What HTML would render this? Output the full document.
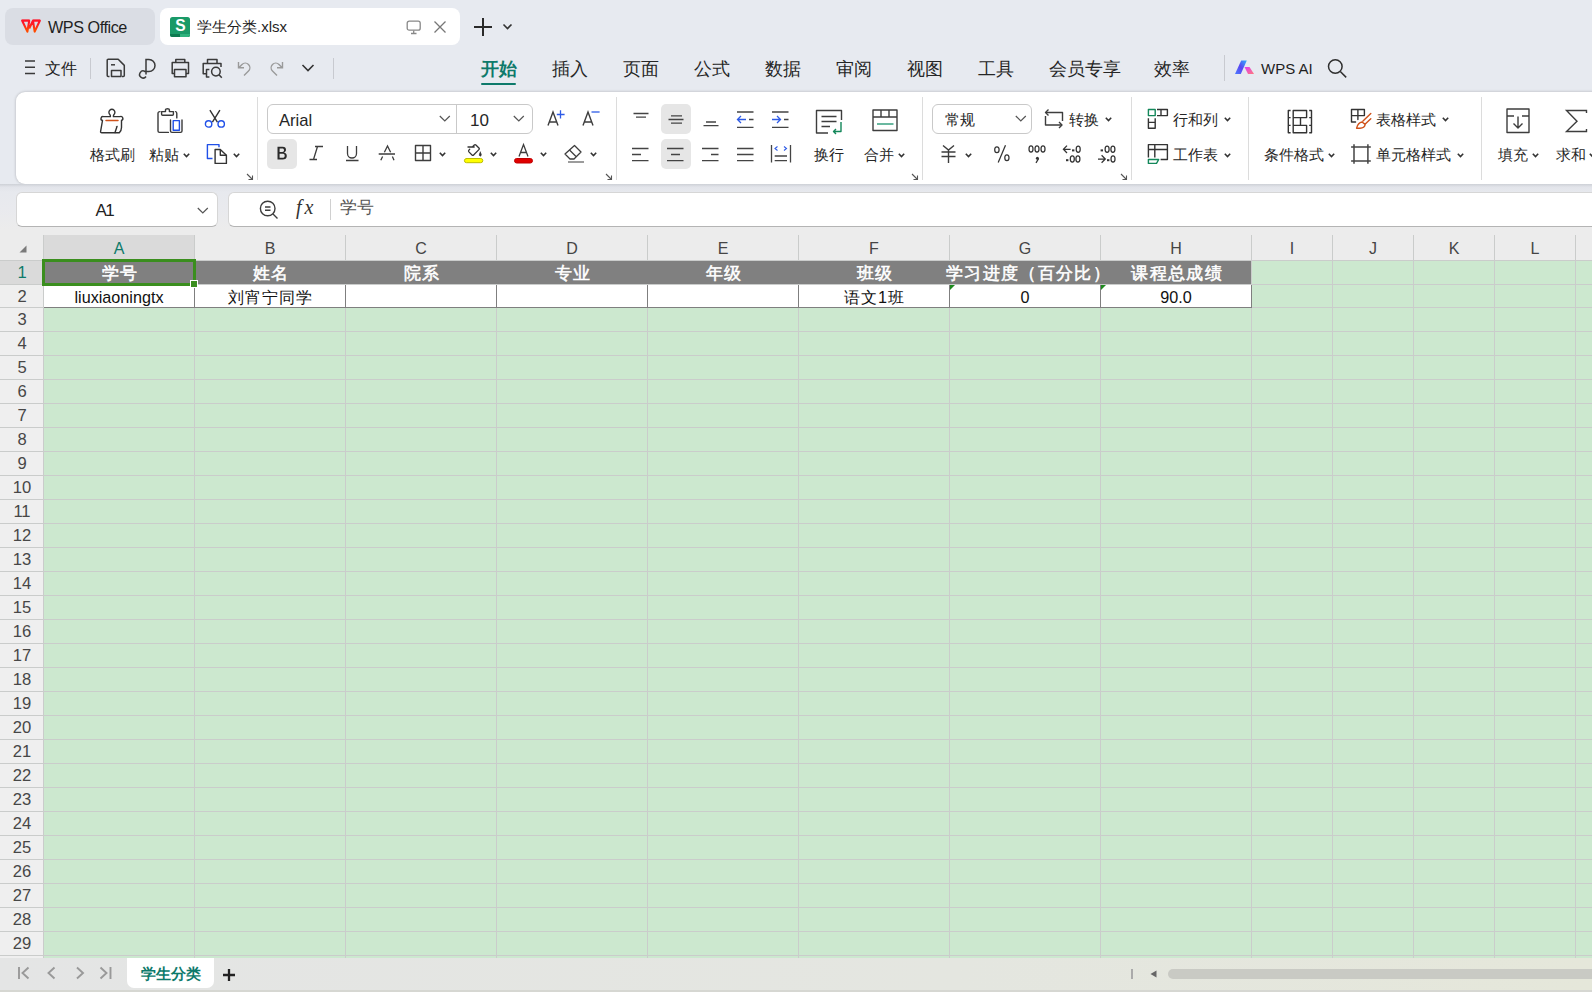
<!DOCTYPE html>
<html><head><meta charset="utf-8">
<style>
*{box-sizing:border-box;margin:0;padding:0}
html,body{width:1592px;height:992px;overflow:hidden}
body{background:#e7eaf0;font-family:"Liberation Sans",sans-serif;color:#262626;position:relative}
.a{position:absolute}
.t{position:absolute;white-space:nowrap;line-height:1}
svg{position:absolute;overflow:visible}
#tab1{left:5px;top:8px;width:150px;height:37px;border-radius:8px;background:#dadde4}
#tab2{left:160px;top:8px;width:300px;height:37px;border-radius:8px;background:#fff}
#ribbon{left:16px;top:92px;width:1600px;height:92px;border-radius:9px;background:#fff;box-shadow:0 0 3px rgba(0,0,0,.25)}
#fbar{left:0;top:184px;width:1592px;height:51px;background:linear-gradient(#cdd0d6 0px,#e2e4ea 3px,#e7e9ee 8px,#e9eaee 25px,#ececec 45px)}
#namebox{left:16px;top:192px;width:202px;height:35px;border-radius:6px;background:#fff;border:1px solid #d6d6d6;border-bottom-color:#b4b4b4}
#fbox{left:228px;top:192px;width:1400px;height:35px;border-radius:6px;background:#fff;border:1px solid #d6d6d6;border-bottom-color:#b4b4b4}
#grid{left:0;top:235px;width:1592px;height:723px;background:#ececec;overflow:hidden}
#sheetbar{left:0;top:958px;width:1592px;height:34px;background:linear-gradient(90deg,#e4e5e5 0%,#e4e6e0 60%,#e5e7da 100%)}
.mt{font-size:17.6px;top:61px;color:#262626}
.cl{font-size:16px;text-align:center;color:#444}
.rl{font-size:16.6px;text-align:center}
.hc{font-size:17px;font-weight:normal;-webkit-text-stroke:0.55px #fff;color:#fff;text-align:center;letter-spacing:1.3px}
.dc{font-size:16.2px;color:#111;text-align:center}
.sep{position:absolute;top:97px;width:1px;height:83px;background:#dcdcdc}
.rl15{font-size:15px;color:#262626;margin-top:1px}
.chev{fill:none;stroke:#333;stroke-width:1.6}
.chevl{fill:none;stroke:#555;stroke-width:1.2}
.box{border:1px solid #c9c9c9;border-radius:6px;background:#fff}
</style></head><body><!-- title bar -->
<div id="tab1" class="a"></div>
<div id="tab2" class="a"></div>
<svg style="left:17px;top:15px" width="30" height="22"><defs><linearGradient id="wl" x1="0" y1="0" x2="0" y2="1"><stop offset="0.2" stop-color="#ff1428"/><stop offset="0.9" stop-color="#ff4a00"/></linearGradient></defs><path fill="none" stroke="url(#wl)" stroke-width="2.1" stroke-linejoin="round" d="M5.2 5.8H12.2L10.4 16.6ZM16 5.8H22.8L17.7 16.6ZM15.8 6L12.2 13.5"/><path fill="none" stroke="#ff1428" stroke-width="1.6" d="M4.6 5.2H12.7M15.5 5.2H23.3"/></svg>
<div class="t" style="left:48px;top:19px;font-size:16.2px;letter-spacing:-0.45px;color:#1f1f1f">WPS Office</div>
<div class="a" style="left:170px;top:17px;width:20px;height:20px;background:#1a9a68;border-radius:2.5px;overflow:hidden"><div class="a" style="left:0;top:17px;width:20px;height:3px;background:#0d7a50"></div><div class="a" style="left:10px;top:17px;width:10px;height:3px;background:#2fb37d"></div></div>
<div class="t" style="left:175.2px;top:18.2px;font-size:15.6px;font-weight:bold;color:#fff">S</div>
<div class="t" style="left:197px;top:19px;font-size:15px;color:#1f1f1f">学生分类.xlsx</div>
<svg style="left:406px;top:20px" width="16" height="15" fill="none" stroke="#888" stroke-width="1.3"><rect x="1.2" y="1.2" width="13" height="9" rx="2"/><path d="M5 13.5H10.5M7.7 10.5V13.5"/></svg>
<svg style="left:433px;top:20px" width="14" height="14" fill="none" stroke="#777" stroke-width="1.3"><path d="M1.5 1.5L12.5 12.5M12.5 1.5L1.5 12.5"/></svg>
<svg style="left:473px;top:17px" width="20" height="20" fill="none" stroke="#2a2a2a" stroke-width="2"><path d="M10 1V19M1 10H19"/></svg>
<svg style="left:502px;top:23px" width="11" height="8" fill="none" stroke="#333" stroke-width="1.6"><path d="M1.5 1.5L5.5 5.5L9.5 1.5"/></svg>

<!-- menu bar -->
<svg style="left:24px;top:59px" width="12" height="16" fill="none" stroke="#3a3a3a" stroke-width="1.6"><path d="M1 2H11M1 8.3H11M1 14.5H11"/></svg>
<div class="t" style="left:44.5px;top:60.5px;font-size:16px;color:#222">文件</div>
<div class="a" style="left:90px;top:58px;width:1px;height:21px;background:#c8cad0"></div>
<svg style="left:106px;top:58px" width="20" height="20" fill="none" stroke="#3a3a3a" stroke-width="1.5" stroke-linejoin="round"><path d="M3.5 18.5H2.2A1 1 0 0 1 1.2 17.5V2.3A1 1 0 0 1 2.2 1.3H12.2L18.3 7.4V17.5A1 1 0 0 1 17.3 18.5H16"/><path d="M5.5 18.5V12.5H15V18.5Z"/><path d="M5 6.8H9"/></svg>
<svg style="left:140px;top:58px" width="17" height="20" fill="none" stroke="#3a3a3a" stroke-width="1.5"><path d="M6 16.5V1.5H9A6 6 0 0 1 9 13.5H5A3.5 3.5 0 1 0 6 18.5"/></svg>
<svg style="left:171px;top:58px" width="19" height="20" fill="none" stroke="#3a3a3a" stroke-width="1.5" stroke-linejoin="round"><path d="M4.8 4.5V1.5H13.8V4.5"/><path d="M3.5 15.5H1.2V4.5H17.5V15.5H15"/><path d="M3.5 11.5H15V18.8H3.5Z"/></svg>
<svg style="left:202px;top:58px" width="22" height="21" fill="none" stroke="#3a3a3a" stroke-width="1.5" stroke-linejoin="round"><path d="M5.5 5.4V1.5H15V5.4"/><path d="M4 15.75H1.2V5.4H19V9"/><path d="M7.4 11.4H4.5V19H7.4"/><circle cx="13.9" cy="13.6" r="4.3"/><path d="M17 16.8L19.8 19.7"/></svg>
<svg style="left:237px;top:60px" width="15" height="17" fill="none" stroke="#9a9a9a" stroke-width="1.4"><path d="M7 15.5L11.5 11A4.5 4.5 0 0 0 5 4.5L2 7.5M1.5 2V7.8H7"/></svg>
<svg style="left:269px;top:60px" width="15" height="17" fill="none" stroke="#9a9a9a" stroke-width="1.4"><path d="M8 15.5L3.5 11A4.5 4.5 0 0 1 10 4.5L13 7.5M13.5 2V7.8H8"/></svg>
<svg style="left:301px;top:63px" width="14" height="10" fill="none" stroke="#333" stroke-width="1.6"><path d="M1.5 2L7 7.5L12.5 2"/></svg>
<div class="a" style="left:333px;top:58px;width:1px;height:21px;background:#c8cad0"></div>

<div class="t mt" style="left:480.5px;font-weight:bold;color:#0e7a6b">开始</div>
<div class="a" style="left:481px;top:83px;width:35px;height:2px;background:#0e7a6b;border-radius:1px"></div>
<div class="t mt" style="left:552px">插入</div>
<div class="t mt" style="left:623px">页面</div>
<div class="t mt" style="left:694px">公式</div>
<div class="t mt" style="left:765px">数据</div>
<div class="t mt" style="left:836px">审阅</div>
<div class="t mt" style="left:907px">视图</div>
<div class="t mt" style="left:978px">工具</div>
<div class="t mt" style="left:1048.5px">会员专享</div>
<div class="t mt" style="left:1153.5px">效率</div>
<div class="a" style="left:1224px;top:55px;width:1px;height:26px;background:#c8cad0"></div>
<svg style="left:1234px;top:59px" width="22" height="16"><defs><linearGradient id="g1" x1="0" y1="1" x2="1" y2="0"><stop offset="0" stop-color="#4a7cff"/><stop offset="0.5" stop-color="#5b45f0"/><stop offset="1" stop-color="#2fb0ff"/></linearGradient><linearGradient id="g2" x1="0" y1="0" x2="1" y2="1"><stop offset="0" stop-color="#e03af5"/><stop offset="1" stop-color="#ff7a7a"/></linearGradient></defs><path d="M1 15L7.2 1.5H12.8L6.8 15Z" fill="url(#g1)"/><path d="M10.5 8H15.5L20 15H14Z" fill="url(#g2)"/></svg>
<div class="t" style="left:1261px;top:61px;font-size:15px;color:#1f1f1f">WPS AI</div>
<svg style="left:1327px;top:58px" width="21" height="21" fill="none" stroke="#2f2f2f" stroke-width="1.5"><circle cx="8.3" cy="8.5" r="6.8"/><path d="M13.3 13.5L19.2 19.4"/></svg>
<div id="ribbon" class="a"></div>
<!-- group separators -->
<div class="sep" style="left:257px"></div>
<div class="sep" style="left:616px"></div>
<div class="sep" style="left:922px"></div>
<div class="sep" style="left:1131px"></div>
<div class="sep" style="left:1248px"></div>
<div class="sep" style="left:1481px"></div>
<!-- launchers -->
<svg style="left:246px;top:173px" width="8" height="8"><path d="M1 1L6.5 6.5M6.5 2.5V6.5H2.5" fill="none" stroke="#555" stroke-width="1.1"/></svg>
<svg style="left:605px;top:173px" width="8" height="8"><path d="M1 1L6.5 6.5M6.5 2.5V6.5H2.5" fill="none" stroke="#555" stroke-width="1.1"/></svg>
<svg style="left:911px;top:173px" width="8" height="8"><path d="M1 1L6.5 6.5M6.5 2.5V6.5H2.5" fill="none" stroke="#555" stroke-width="1.1"/></svg>
<svg style="left:1120px;top:173px" width="8" height="8"><path d="M1 1L6.5 6.5M6.5 2.5V6.5H2.5" fill="none" stroke="#555" stroke-width="1.1"/></svg>

<!-- clipboard group -->
<svg style="left:99px;top:107px" width="26" height="28" fill="none" stroke="#333" stroke-width="1.4" stroke-linejoin="round" stroke-linecap="round">
 <path d="M11.4 9.6Q11.6 8.6 10.8 7.4A3 3 0 1 1 15 7.4Q14.2 8.6 14.4 9.6H21A2 2 0 0 1 22.5 13.5V20.5Q22.5 23.5 20.3 25.7H2.8Q1.3 25.7 1.6 24.3L3.5 13.5A2 2 0 0 1 4.5 9.6Z"/>
 <path d="M18 19.5L16 25.5"/>
 <path d="M7 13.4H19" stroke="#d0521a" stroke-width="1.5"/>
</svg>
<div class="t rl15" style="left:90px;top:146px">格式刷</div>
<svg style="left:156px;top:107px" width="28" height="28" fill="none" stroke="#3a3a3a" stroke-width="1.4" stroke-linejoin="round" stroke-linecap="round">
 <path d="M4 4.6Q2 4.6 2 6.5V24Q2 25.4 3.5 25.4H12.4"/>
 <path d="M19.5 4.6Q20.8 4.6 20.8 6.5V10.9"/>
 <path d="M5.6 4.6H9.5V2.8Q9.5 1.8 11.5 1.8Q13.4 1.8 13.4 2.8V4.6H17.4V7.2Q17.4 8.3 16.4 8.3H6.6Q5.6 8.3 5.6 7.2Z"/>
 <path d="M14.5 13V24Q14.5 25.4 16 25.4H24.6Q26 25.4 26 24V13"/>
 <rect x="17.2" y="13.6" width="6.2" height="9.6" stroke="#1f4ee6"/>
</svg>
<div class="t rl15" style="left:149px;top:146px">粘贴</div>
<svg class="chev" style="left:183px;top:153px" width="7" height="5"><path d="M0.8 0.8L3.5 3.5L6.2 0.8"/></svg>
<svg style="left:204px;top:109px" width="22" height="20" fill="none" stroke-width="1.4">
 <path d="M5.9 1.1L13.4 13.2M15.9 1.1L8.4 13.2" stroke="#333"/>
 <circle cx="4.6" cy="14.9" r="3.2" stroke="#2050e8"/>
 <circle cx="17.2" cy="14.9" r="3.2" stroke="#2050e8"/>
</svg>
<svg style="left:206px;top:143px" width="23" height="22" fill="none" stroke-width="1.4" stroke-linejoin="round">
 <path d="M6.5 15.5H1.4V1.6H13V4.2" stroke="#2050e8"/>
 <path d="M9.1 6.5H14.3L20.4 12.3V20.4H9.1Z" stroke="#333"/>
 <path d="M14.3 6.5V12.3H20.4" stroke="#333"/>
</svg>
<svg class="chev" style="left:233px;top:153px" width="7" height="5"><path d="M0.8 0.8L3.5 3.5L6.2 0.8"/></svg>

<!-- font group -->
<div class="a box" style="left:267px;top:104px;width:266px;height:30px"></div>
<div class="a" style="left:456px;top:105px;width:1px;height:28px;background:#c9c9c9"></div>
<div class="t" style="left:279px;top:113px;font-size:16.6px;color:#262626">Arial</div>
<svg class="chevl" style="left:439px;top:115px" width="12" height="8"><path d="M0.8 1L5.8 6L10.8 1"/></svg>
<div class="t" style="left:470px;top:112px;font-size:17px;color:#262626">10</div>
<svg class="chevl" style="left:513px;top:115px" width="12" height="8"><path d="M0.8 1L5.8 6L10.8 1"/></svg>
<svg style="left:546px;top:109px" width="22" height="19" fill="none" stroke-width="1.4">
 <path d="M2 16.6L7 3L12 16.6M3.5 13H10.5" stroke="#3d3d3d"/>
 <path d="M10.8 5.5H18.6M14.5 1.3V9.6" stroke="#2e5be6" stroke-width="1.3"/>
</svg>
<svg style="left:581px;top:109px" width="22" height="19" fill="none" stroke-width="1.4">
 <path d="M2 16.6L7 3L12 16.6M3.5 13H10.5" stroke="#3d3d3d"/>
 <path d="M10.5 3H18.6" stroke="#2e5be6" stroke-width="1.3"/>
</svg>
<div class="a" style="left:267px;top:139px;width:30px;height:30px;border-radius:5px;background:#e6e6e6"></div>
<svg style="left:275px;top:145px" width="14" height="16"><path d="M2.5 1.8H7.6C10 1.8 11 3 11 4.8C11 6.3 10.1 7.2 8.8 7.6C10.6 7.9 11.8 9 11.8 10.9C11.8 13.2 10.2 14.5 7.6 14.5H2.5ZM4.6 3.6V6.9H7.3C8.5 6.9 9 6.3 9 5.2C9 4.1 8.4 3.6 7.3 3.6ZM4.6 8.7V12.7H7.5C9 12.7 9.7 12.1 9.7 10.7C9.7 9.3 8.9 8.7 7.4 8.7Z" fill="#2a2a2a"/></svg>
<svg style="left:308px;top:145px" width="16" height="16" fill="none" stroke="#3d3d3d" stroke-width="1.3"><path d="M7 1.5H15M9.5 1.5L5.5 14.5M1.5 14.5H9"/></svg>
<svg style="left:345px;top:145px" width="15" height="17" fill="none" stroke="#3d3d3d" stroke-width="1.3"><path d="M2.5 1V8.5A4.5 4.5 0 0 0 11.5 8.5V1M1 15.5H13.5"/></svg>
<svg style="left:378px;top:145px" width="18" height="17" fill="none" stroke="#3d3d3d" stroke-width="1.3"><path d="M6.4 7.2L9.5 0.9L12.6 7.2M0.7 9H17M4.6 11.5L2.8 15.3M14.4 11.5L16 15.3"/></svg>
<svg style="left:414px;top:144px" width="18" height="18" fill="none" stroke="#3d3d3d" stroke-width="1.4" stroke-linejoin="round"><path d="M1.5 1.5H16.5V16.5H1.5ZM9 1.5V16.5M1.5 9H16.5"/></svg>
<svg class="chev" style="left:439px;top:152px" width="7" height="5"><path d="M0.8 0.8L3.5 3.5L6.2 0.8"/></svg>
<svg style="left:463px;top:143px" width="21" height="21" fill="none" stroke="#333" stroke-width="1.3" stroke-linejoin="round" stroke-linecap="round">
 <path d="M6.7 6.3L5.9 7.1Q5.2 8.1 5.9 8.9L9 12Q9.8 12.8 10.6 12L15.9 6.6Q16.7 5.8 15.9 5L12.9 2Q12.1 1.2 11.3 2L9.6 3.7M5 4H11.2"/>
 <path d="M17.3 9.1Q18.6 11.5 18.3 12.3Q17.3 14 16.3 12.3Q16 11.5 17.3 9.1Z" fill="#333" stroke-width="0.6"/>
 <rect x="1.4" y="15.5" width="18.4" height="4.2" rx="2.1" fill="#ffff00" stroke="#bdbd00" stroke-width="1"/>
</svg>
<svg class="chev" style="left:490px;top:152px" width="7" height="5"><path d="M0.8 0.8L3.5 3.5L6.2 0.8"/></svg>
<svg style="left:513px;top:143px" width="21" height="21" fill="none" stroke="#3d3d3d" stroke-width="1.3">
 <path d="M6 13.5L10.5 1.5L15 13.5M7.5 9.5H13.5"/>
 <rect x="1.5" y="15.5" width="18" height="4.5" rx="2.2" fill="#e00000" stroke="#c00000" stroke-width="1"/>
</svg>
<svg class="chev" style="left:540px;top:152px" width="7" height="5"><path d="M0.8 0.8L3.5 3.5L6.2 0.8"/></svg>
<svg style="left:563px;top:144px" width="22" height="20" fill="none" stroke="#3d3d3d" stroke-width="1.3" stroke-linejoin="round">
 <path d="M11.5 1.5L18 8L11 15H7L2 10Z"/>
 <path d="M6.5 6L13 12.5"/>
 <path d="M5 18H21" stroke="#666"/>
</svg>
<svg class="chev" style="left:590px;top:152px" width="7" height="5"><path d="M0.8 0.8L3.5 3.5L6.2 0.8"/></svg>

<!-- alignment group -->
<div class="a" style="left:661px;top:104px;width:30px;height:30px;border-radius:5px;background:#e6e6e6"></div>
<div class="a" style="left:661px;top:139px;width:30px;height:30px;border-radius:5px;background:#e6e6e6"></div>
<svg style="left:630px;top:108px" width="165" height="60" fill="none" stroke="#444" stroke-width="1.3">
 <!-- top align -->
 <path d="M3.5 5.5H18.5M6 9.2H16"/>
 <!-- middle -->
 <path d="M41 7.8H52M38.5 11.5H53.5M41 15.2H52"/>
 <!-- bottom -->
 <path d="M76 14H86M73.5 17.7H88.5"/>
 <!-- decrease indent -->
 <path d="M107 4H123.5M107 19.3H123.5M119 11.5H123.5"/>
 <path d="M107.5 11.5H116M111 8L107.5 11.5L111 15" stroke="#2e5be6"/>
 <!-- increase indent -->
 <path d="M142 4H158.5M142 19.3H158.5M154 11.5H158.5"/>
 <path d="M142 11.5H150.5M147 8L150.5 11.5L147 15" stroke="#2e5be6"/>
 <!-- left -->
 <path d="M2 40.5H18.5M2 46.5H11M2 52.7H18.5"/>
 <!-- center -->
 <path d="M37 40.5H53.5M41 46.5H50M37 52.7H53.5"/>
 <!-- right -->
 <path d="M72 40.5H88.5M81 46.5H88.5M72 52.7H88.5"/>
 <!-- justify -->
 <path d="M107 40.5H123.5M107 46.5H123.5M107 52.7H123.5"/>
 <!-- distributed -->
 <path d="M141.5 37V54.5M160.5 37V54.5M144.7 48H157M144.7 52.7H157"/>
 <path d="M147.5 38.5L145 40.5L147.5 42.5M154 38.5L156.5 40.5L154 42.5" stroke="#2e5be6" stroke-width="1.1"/>
</svg>
<svg style="left:815px;top:109px" width="28" height="26" fill="none" stroke="#3d3d3d" stroke-width="1.4" stroke-linejoin="round">
 <path d="M26.5 11V1.5H1.5V24H13"/>
 <path d="M6.5 7.5H21.5M6.5 12.5H21.5M6.5 17.5H15"/>
 <path d="M26 13V22.5H18.5M21 20L18.5 22.5L21 25" stroke="#13875a"/>
</svg>
<div class="t rl15" style="left:814px;top:146px">换行</div>
<svg style="left:872px;top:109px" width="27" height="23" fill="none" stroke="#3d3d3d" stroke-width="1.4" stroke-linejoin="round">
 <path d="M1 1H25V21.5H1ZM1 8H25M9 1V8M17 1V8"/>
 <path d="M5 15H21.5" stroke="#2a9a78"/>
</svg>
<div class="t rl15" style="left:864px;top:146px">合并</div>
<svg class="chev" style="left:898px;top:153px" width="7" height="5"><path d="M0.8 0.8L3.5 3.5L6.2 0.8"/></svg>

<!-- number group -->
<div class="a box" style="left:932px;top:104px;width:100px;height:30px"></div>
<div class="t rl15" style="left:945px;top:111px">常规</div>
<svg class="chevl" style="left:1015px;top:115px" width="12" height="8"><path d="M0.8 1L5.8 6L10.8 1"/></svg>
<svg style="left:1043px;top:108px" width="22" height="22" fill="none" stroke="#3d3d3d" stroke-width="1.4" stroke-linejoin="round">
 <path d="M3 4.5H19.5V13"/><path d="M5.5 1.5L2.5 4.5L5.5 7.5"/>
 <path d="M2.5 8V17H19"/><path d="M16 14L19 17L16 20"/>
</svg>
<div class="t rl15" style="left:1069px;top:111px">转换</div>
<svg class="chev" style="left:1105px;top:117px" width="7" height="5"><path d="M0.8 0.8L3.5 3.5L6.2 0.8"/></svg>
<svg style="left:940px;top:144px" width="17" height="20" fill="none" stroke="#3d3d3d" stroke-width="1.4"><path d="M3 1.5L8.5 6L14 1.5M1.5 8H15.5M1.5 12.5H15.5M8.5 6V19"/></svg>
<svg class="chev" style="left:965px;top:153px" width="7" height="5"><path d="M0.8 0.8L3.5 3.5L6.2 0.8"/></svg>
<svg style="left:990px;top:140px" width="130" height="28" fill="none" stroke="#333" stroke-width="1.25">
 <ellipse cx="6.9" cy="9.8" rx="2.2" ry="2.9"/><path d="M15.5 5.3L8.2 22.4"/><ellipse cx="16.9" cy="17.8" rx="2.1" ry="2.9"/>
 <ellipse cx="41" cy="9" rx="2" ry="3.1"/><ellipse cx="47" cy="9" rx="2" ry="3.1"/><ellipse cx="53" cy="9" rx="2" ry="3.1"/>
 <circle cx="47.4" cy="18.3" r="1.5" fill="#333" stroke="none"/><path d="M48.6 18.5L46 22.9" stroke-width="1.3"/>
 <path d="M80.6 9.3H73.6M77 5.6L73.4 9.3L77 13"/><rect x="82" y="9.4" width="2.4" height="2" fill="#333" stroke="none"/><ellipse cx="88.2" cy="9.2" rx="2" ry="3.1"/>
 <rect x="76" y="19.2" width="2.4" height="2" fill="#333" stroke="none"/><ellipse cx="82.3" cy="19" rx="2" ry="3.1"/><ellipse cx="87.9" cy="19" rx="2" ry="3.1"/>
 <rect x="110.6" y="9.4" width="2.4" height="2" fill="#333" stroke="none"/><ellipse cx="117.1" cy="9.2" rx="2" ry="3.1"/><ellipse cx="122.9" cy="9.2" rx="2" ry="3.1"/>
 <path d="M108 19H115.2M111.6 15.3L115.3 19L111.6 22.7"/><rect x="117" y="19.2" width="2.4" height="2" fill="#333" stroke="none"/><ellipse cx="123" cy="19" rx="2" ry="3.1"/>
</svg>

<!-- rows/cols & sheet -->
<svg style="left:1147px;top:108px" width="22" height="22" fill="none" stroke-width="1.4" stroke-linejoin="round">
 <path d="M1.4 1.5H8.2V7.6H1.4Z" stroke="#13875a"/>
 <path d="M10 1.5H20.4V7.6H10M14 1.5V7.6M1.4 10.2V20.2H8.2V10.2M1.4 14.4H8.2" stroke="#333"/>
</svg>
<div class="t rl15" style="left:1173px;top:111px">行和列</div>
<svg class="chev" style="left:1224px;top:117px" width="7" height="5"><path d="M0.8 0.8L3.5 3.5L6.2 0.8"/></svg>
<svg style="left:1147px;top:143px" width="22" height="22" fill="none" stroke-width="1.4" stroke-linejoin="round">
 <path d="M1.4 14.5V1.6H20.4V16.5H13.6M1.4 6.5H20.4M7.8 1.6V14.5" stroke="#333"/>
 <path d="M1.4 16.5H11.7L9.5 20.4H1.4Z" stroke="#13875a"/>
</svg>
<div class="t rl15" style="left:1173px;top:146px">工作表</div>
<svg class="chev" style="left:1224px;top:153px" width="7" height="5"><path d="M0.8 0.8L3.5 3.5L6.2 0.8"/></svg>

<!-- styles -->
<svg style="left:1286px;top:109px" width="28" height="26" fill="none" stroke="#333" stroke-width="1.4" stroke-linejoin="round">
 <path d="M4.6 1.5H2.3V23.7H4.6M2.3 8.6H4.6M2.3 16.4H4.6M23.2 1.5H25.5V23.7H23.2M23.2 8.6H25.5M23.2 16.4H25.5"/>
 <path d="M7.2 1.5H20.6V8.6H7.2ZM7.2 8.6V23.7H20.6V16.4H7.2M14.5 8.6V16.4"/>
</svg>
<div class="t rl15" style="left:1264px;top:146px">条件格式</div>
<svg class="chev" style="left:1328px;top:153px" width="7" height="5"><path d="M0.8 0.8L3.5 3.5L6.2 0.8"/></svg>
<svg style="left:1350px;top:108px" width="22" height="22" fill="none" stroke-width="1.4" stroke-linejoin="round" stroke-linecap="round">
 <path d="M5.6 14H1.5V1.5H14.4V7.6H1.5M7.9 1.5V11.5" stroke="#333"/>
 <path d="M20.8 5.4L13 13M20.8 10.8L15 16.3M6.6 20.2Q8 14.5 12 14L15.2 16.4Q14.5 20.2 10 20.2Z" stroke="#d0521a"/>
</svg>
<div class="t rl15" style="left:1376px;top:111px">表格样式</div>
<svg class="chev" style="left:1442px;top:117px" width="7" height="5"><path d="M0.8 0.8L3.5 3.5L6.2 0.8"/></svg>
<svg style="left:1350px;top:143px" width="22" height="22" fill="none" stroke="#444" stroke-width="1.5"><path d="M4 1.3V20.7M17.9 1.3V20.7M1.1 3.9H20.8M1.1 18.1H20.8"/></svg>
<div class="t rl15" style="left:1376px;top:146px">单元格样式</div>
<svg class="chev" style="left:1457px;top:153px" width="7" height="5"><path d="M0.8 0.8L3.5 3.5L6.2 0.8"/></svg>

<!-- editing -->
<svg style="left:1505px;top:107px" width="26" height="27" fill="none" stroke="#3d3d3d" stroke-width="1.4" stroke-linejoin="round">
 <path d="M2 2H24V25.5H2ZM2 9H9M17 9H24"/><path d="M13 9.5V21M8.5 16.5L13 21L17.5 16.5"/>
</svg>
<div class="t rl15" style="left:1498px;top:146px">填充</div>
<svg class="chev" style="left:1532px;top:153px" width="7" height="5"><path d="M0.8 0.8L3.5 3.5L6.2 0.8"/></svg>
<svg style="left:1565px;top:109px" width="24" height="25" fill="none" stroke="#3d3d3d" stroke-width="1.4" stroke-linejoin="miter"><path d="M21.5 4V1.5H1.5L12 12.2L1.5 22.5H21.5V20"/></svg>
<div class="t rl15" style="left:1556px;top:146px">求和</div>
<svg class="chev" style="left:1589px;top:153px" width="7" height="5"><path d="M0.8 0.8L3.5 3.5L6.2 0.8"/></svg>

<!-- formula bar -->
<div id="fbar" class="a"></div>
<div id="namebox" class="a"></div>
<div id="fbox" class="a"></div>
<div class="t" style="left:95.5px;top:201.5px;font-size:17px;letter-spacing:-1.6px;color:#222">A1</div>
<svg class="chevl" style="left:197px;top:207px" width="12" height="8"><path d="M0.8 1L5.8 6L10.8 1"/></svg>
<svg style="left:258.5px;top:199.5px" width="21" height="20" fill="none" stroke="#3d3d3d" stroke-width="1.4"><circle cx="8.7" cy="8.5" r="7.3"/><path d="M6 7H11.5M6 10.3H11.5M14 14L18.5 18.5"/></svg>
<div class="t" style="left:296px;top:197px;font-size:20px;font-style:italic;letter-spacing:3px;font-family:'Liberation Serif',serif;color:#333">fx</div>
<div class="a" style="left:330px;top:199px;width:1px;height:21px;background:#d0d0d0"></div>
<div class="t" style="left:340px;top:199px;font-size:17px;color:#555">学号</div>
<div id="grid" class="a"><div class="a" style="left:0;top:0;width:1592px;height:25px;background:#ececec"></div><div class="a" style="left:44px;top:0;width:150px;height:25px;background:#dadada"></div><div class="a" style="left:0;top:26px;width:43px;height:800px;background:#efefef"></div><div class="a" style="left:0;top:26px;width:43px;height:23px;background:#dadada"></div><div class="a" style="left:44px;top:26px;width:1600px;height:800px;background:#cce8cf"></div><div class="a" style="left:0;top:25px;width:1592px;height:1px;background:#cacccb"></div><div class="a" style="left:0;top:49px;width:1592px;height:1px;background:#cacccb"></div><div class="a" style="left:0;top:72px;width:1592px;height:1px;background:#cacccb"></div><div class="a" style="left:0;top:96px;width:1592px;height:1px;background:#cacccb"></div><div class="a" style="left:0;top:120px;width:1592px;height:1px;background:#cacccb"></div><div class="a" style="left:0;top:144px;width:1592px;height:1px;background:#cacccb"></div><div class="a" style="left:0;top:168px;width:1592px;height:1px;background:#cacccb"></div><div class="a" style="left:0;top:192px;width:1592px;height:1px;background:#cacccb"></div><div class="a" style="left:0;top:216px;width:1592px;height:1px;background:#cacccb"></div><div class="a" style="left:0;top:240px;width:1592px;height:1px;background:#cacccb"></div><div class="a" style="left:0;top:264px;width:1592px;height:1px;background:#cacccb"></div><div class="a" style="left:0;top:288px;width:1592px;height:1px;background:#cacccb"></div><div class="a" style="left:0;top:312px;width:1592px;height:1px;background:#cacccb"></div><div class="a" style="left:0;top:336px;width:1592px;height:1px;background:#cacccb"></div><div class="a" style="left:0;top:360px;width:1592px;height:1px;background:#cacccb"></div><div class="a" style="left:0;top:384px;width:1592px;height:1px;background:#cacccb"></div><div class="a" style="left:0;top:408px;width:1592px;height:1px;background:#cacccb"></div><div class="a" style="left:0;top:432px;width:1592px;height:1px;background:#cacccb"></div><div class="a" style="left:0;top:456px;width:1592px;height:1px;background:#cacccb"></div><div class="a" style="left:0;top:480px;width:1592px;height:1px;background:#cacccb"></div><div class="a" style="left:0;top:504px;width:1592px;height:1px;background:#cacccb"></div><div class="a" style="left:0;top:528px;width:1592px;height:1px;background:#cacccb"></div><div class="a" style="left:0;top:552px;width:1592px;height:1px;background:#cacccb"></div><div class="a" style="left:0;top:576px;width:1592px;height:1px;background:#cacccb"></div><div class="a" style="left:0;top:600px;width:1592px;height:1px;background:#cacccb"></div><div class="a" style="left:0;top:624px;width:1592px;height:1px;background:#cacccb"></div><div class="a" style="left:0;top:648px;width:1592px;height:1px;background:#cacccb"></div><div class="a" style="left:0;top:672px;width:1592px;height:1px;background:#cacccb"></div><div class="a" style="left:0;top:696px;width:1592px;height:1px;background:#cacccb"></div><div class="a" style="left:0;top:720px;width:1592px;height:1px;background:#cacccb"></div><div class="a" style="left:43px;top:0;width:1px;height:800px;background:#cacccb"></div><div class="a" style="left:194px;top:0;width:1px;height:800px;background:#cacccb"></div><div class="a" style="left:345px;top:0;width:1px;height:800px;background:#cacccb"></div><div class="a" style="left:496px;top:0;width:1px;height:800px;background:#cacccb"></div><div class="a" style="left:647px;top:0;width:1px;height:800px;background:#cacccb"></div><div class="a" style="left:798px;top:0;width:1px;height:800px;background:#cacccb"></div><div class="a" style="left:949px;top:0;width:1px;height:800px;background:#cacccb"></div><div class="a" style="left:1100px;top:0;width:1px;height:800px;background:#cacccb"></div><div class="a" style="left:1251px;top:0;width:1px;height:800px;background:#cacccb"></div><div class="a" style="left:1332px;top:0;width:1px;height:800px;background:#cacccb"></div><div class="a" style="left:1413px;top:0;width:1px;height:800px;background:#cacccb"></div><div class="a" style="left:1494px;top:0;width:1px;height:800px;background:#cacccb"></div><div class="a" style="left:1575px;top:0;width:1px;height:800px;background:#cacccb"></div><div class="a" style="left:1656px;top:0;width:1px;height:800px;background:#cacccb"></div><div class="a" style="left:44px;top:26px;width:1207px;height:23px;background:#808080"></div><div class="a" style="left:44px;top:50px;width:1207px;height:22px;background:#fff"></div><div class="t cl" style="left:99.0px;width:40px;top:6px;color:#0e7a6b">A</div><div class="t cl" style="left:250.0px;width:40px;top:6px;color:#454545">B</div><div class="t cl" style="left:401.0px;width:40px;top:6px;color:#454545">C</div><div class="t cl" style="left:552.0px;width:40px;top:6px;color:#454545">D</div><div class="t cl" style="left:703.0px;width:40px;top:6px;color:#454545">E</div><div class="t cl" style="left:854.0px;width:40px;top:6px;color:#454545">F</div><div class="t cl" style="left:1005.0px;width:40px;top:6px;color:#454545">G</div><div class="t cl" style="left:1156.0px;width:40px;top:6px;color:#454545">H</div><div class="t cl" style="left:1272.0px;width:40px;top:6px;color:#454545">I</div><div class="t cl" style="left:1353.0px;width:40px;top:6px;color:#454545">J</div><div class="t cl" style="left:1434.0px;width:40px;top:6px;color:#454545">K</div><div class="t cl" style="left:1515.0px;width:40px;top:6px;color:#454545">L</div><div class="t cl" style="left:1596.0px;width:40px;top:6px;color:#454545">M</div><div class="t rl" style="left:0.5px;width:43px;top:30px;color:#0e7a6b">1</div><div class="t rl" style="left:0.5px;width:43px;top:54px;color:#474747">2</div><div class="t rl" style="left:0.5px;width:43px;top:77px;color:#474747">3</div><div class="t rl" style="left:0.5px;width:43px;top:101px;color:#474747">4</div><div class="t rl" style="left:0.5px;width:43px;top:125px;color:#474747">5</div><div class="t rl" style="left:0.5px;width:43px;top:149px;color:#474747">6</div><div class="t rl" style="left:0.5px;width:43px;top:173px;color:#474747">7</div><div class="t rl" style="left:0.5px;width:43px;top:197px;color:#474747">8</div><div class="t rl" style="left:0.5px;width:43px;top:221px;color:#474747">9</div><div class="t rl" style="left:0.5px;width:43px;top:245px;color:#474747">10</div><div class="t rl" style="left:0.5px;width:43px;top:269px;color:#474747">11</div><div class="t rl" style="left:0.5px;width:43px;top:293px;color:#474747">12</div><div class="t rl" style="left:0.5px;width:43px;top:317px;color:#474747">13</div><div class="t rl" style="left:0.5px;width:43px;top:341px;color:#474747">14</div><div class="t rl" style="left:0.5px;width:43px;top:365px;color:#474747">15</div><div class="t rl" style="left:0.5px;width:43px;top:389px;color:#474747">16</div><div class="t rl" style="left:0.5px;width:43px;top:413px;color:#474747">17</div><div class="t rl" style="left:0.5px;width:43px;top:437px;color:#474747">18</div><div class="t rl" style="left:0.5px;width:43px;top:461px;color:#474747">19</div><div class="t rl" style="left:0.5px;width:43px;top:485px;color:#474747">20</div><div class="t rl" style="left:0.5px;width:43px;top:509px;color:#474747">21</div><div class="t rl" style="left:0.5px;width:43px;top:533px;color:#474747">22</div><div class="t rl" style="left:0.5px;width:43px;top:557px;color:#474747">23</div><div class="t rl" style="left:0.5px;width:43px;top:581px;color:#474747">24</div><div class="t rl" style="left:0.5px;width:43px;top:605px;color:#474747">25</div><div class="t rl" style="left:0.5px;width:43px;top:629px;color:#474747">26</div><div class="t rl" style="left:0.5px;width:43px;top:653px;color:#474747">27</div><div class="t rl" style="left:0.5px;width:43px;top:677px;color:#474747">28</div><div class="t rl" style="left:0.5px;width:43px;top:701px;color:#474747">29</div><svg style="left:19px;top:10px" width="8" height="8"><path d="M7.5 0.5V7.5H0.5Z" fill="#7a7a7a"/></svg><div class="t hc" style="left:20.2px;width:200px;top:30px">学号</div><div class="t hc" style="left:171.2px;width:200px;top:30px">姓名</div><div class="t hc" style="left:322.2px;width:200px;top:30px">院系</div><div class="t hc" style="left:473.2px;width:200px;top:30px">专业</div><div class="t hc" style="left:624.2px;width:200px;top:30px">年级</div><div class="t hc" style="left:775.2px;width:200px;top:30px">班级</div><div class="t hc" style="left:928.5px;width:200px;top:30px">学习进度（百分比）</div><div class="t hc" style="left:1077.2px;width:200px;top:30px">课程总成绩</div><div class="t dc" style="left:19.0px;width:200px;top:54px;">liuxiaoningtx</div><div class="t dc" style="left:170.6px;width:200px;top:54px;letter-spacing:1.2px;">刘宵宁同学</div><div class="t dc" style="left:774.6px;width:200px;top:54px;letter-spacing:1.2px;">语文1班</div><div class="t dc" style="left:925.0px;width:200px;top:54px;">0</div><div class="t dc" style="left:1076.0px;width:200px;top:54px;">90.0</div><div class="a" style="left:194px;top:50px;width:1px;height:23px;background:#7f7f7f"></div><div class="a" style="left:345px;top:50px;width:1px;height:23px;background:#7f7f7f"></div><div class="a" style="left:496px;top:50px;width:1px;height:23px;background:#7f7f7f"></div><div class="a" style="left:647px;top:50px;width:1px;height:23px;background:#7f7f7f"></div><div class="a" style="left:798px;top:50px;width:1px;height:23px;background:#7f7f7f"></div><div class="a" style="left:949px;top:50px;width:1px;height:23px;background:#7f7f7f"></div><div class="a" style="left:1100px;top:50px;width:1px;height:23px;background:#7f7f7f"></div><div class="a" style="left:1251px;top:50px;width:1px;height:23px;background:#7f7f7f"></div><div class="a" style="left:44px;top:72px;width:1208px;height:1px;background:#7f7f7f"></div><svg style="left:950px;top:50px" width="6" height="6"><path d="M0 0H5L0 5Z" fill="#1e8a1e"/></svg><svg style="left:1101px;top:50px" width="6" height="6"><path d="M0 0H5L0 5Z" fill="#1e8a1e"/></svg><div class="a" style="left:42px;top:24px;width:154px;height:27px;border:3px solid #3a8e1e"></div><div class="a" style="left:191px;top:46px;width:6px;height:6px;background:#3a8e1e;outline:1px solid #fff"></div></div><div id="sheetbar" class="a"></div>
<div class="a" style="left:0;top:990px;width:1592px;height:2px;background:#d6d7d2"></div>
<svg style="left:17px;top:966px" width="100" height="14" fill="none" stroke="#999" stroke-width="1.9">
 <path d="M2 1V13M11.5 1.5L5.5 7L11.5 12.5"/>
 <path d="M37.5 1.5L31.5 7L37.5 12.5"/>
 <path d="M60 1.5L66 7L60 12.5"/>
 <path d="M83.5 1.5L89.5 7L83.5 12.5M93.5 1V13"/>
</svg>
<div class="a" style="left:127px;top:958px;width:87px;height:30px;background:#fff;border-radius:0 0 7px 7px"></div>
<div class="t" style="left:141px;top:966px;font-size:15px;font-weight:bold;color:#0e7a6b">学生分类</div>
<svg style="left:222px;top:968px" width="14" height="14" fill="none" stroke="#222" stroke-width="2.3"><path d="M7 1V13M1 7H13"/></svg>
<div class="a" style="left:1131px;top:969px;width:2px;height:10px;background:#aaa"></div>
<svg style="left:1150px;top:970px" width="7" height="8"><path d="M6.5 0.5V7.5L0.5 4Z" fill="#666"/></svg>
<div class="a" style="left:1168px;top:969px;width:500px;height:10px;border-radius:5px;background:#c9cac4"></div>
</body></html>
